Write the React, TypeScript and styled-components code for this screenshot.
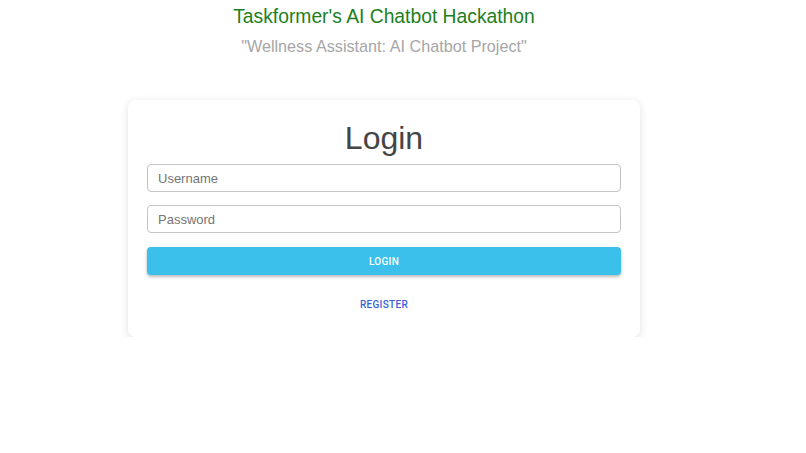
import React from "react";
import styled, { createGlobalStyle } from "styled-components";

const GlobalStyle = createGlobalStyle`
    body {
        margin: 0;
        background: #ffffff;
        font-family: "Liberation Sans", Arial, sans-serif;
    }
`;

const Page = styled.div`
    width: 768px;
    display: flex;
    flex-direction: column;
    align-items: center;
`;

const Header = styled.header`
    display: flex;
    flex-direction: column;
    align-items: center;
    padding-top: 6px;
`;

const Title = styled.h2`
    margin: 0;
    font-size: 19.3px;
    font-weight: normal;
    line-height: 22px;
    color: #1d7f1d;
`;

const Subtitle = styled.h3`
    margin: 7px 0 0;
    font-size: 16.2px;
    font-weight: normal;
    line-height: 22px;
    color: #a6a6a6;
`;

const Card = styled.form`
    margin-top: 43px;
    width: 512px;
    box-sizing: border-box;
    padding: 18px 19px 23px;
    background: #fff;
    border-radius: 8px;
    box-shadow: 0 2px 8px rgba(0, 0, 0, 0.12);
    display: flex;
    flex-direction: column;
`;

const Heading = styled.h1`
    margin: 0 0 6px;
    text-align: center;
    font-size: 32px;
    font-weight: normal;
    line-height: 40px;
    color: #454545;
`;

const Input = styled.input`
    height: 28px;
    box-sizing: border-box;
    margin-bottom: 13px;
    padding: 0 10px;
    border: 1px solid #c4c4c4;
    border-radius: 4px;
    font-family: "Liberation Sans", Arial, sans-serif;
    font-size: 13px;
    color: #333;
    outline: none;

    &::placeholder {
        color: #757575;
    }
`;

const SubmitButton = styled.button`
    height: 28px;
    margin-top: 1px;
    border: none;
    border-radius: 4px;
    background: #3bc0ec;
    color: #fff;
    font-family: Roboto, "Liberation Sans", sans-serif;
    font-size: 10px;
    font-weight: 500;
    letter-spacing: 0.3px;
    text-transform: uppercase;
    box-shadow: 0 2px 3px rgba(0, 0, 0, 0.2), 0 1px 5px rgba(0, 0, 0, 0.1);
    cursor: pointer;
`;

const LinkButton = styled.button`
    align-self: center;
    margin-top: 20px;
    padding: 4px 8px;
    border: none;
    background: transparent;
    color: #3a5fd9;
    font-family: Roboto, "Liberation Sans", sans-serif;
    font-size: 10px;
    font-weight: 500;
    letter-spacing: 0.3px;
    text-transform: uppercase;
    cursor: pointer;
`;

export default function App() {
    return (
        <>
            <GlobalStyle />
            <Page>
                <Header>
                    <Title>Taskformer's AI Chatbot Hackathon</Title>
                    <Subtitle>"Wellness Assistant: AI Chatbot Project"</Subtitle>
                </Header>
                <Card onSubmit={(e) => e.preventDefault()}>
                    <Heading>Login</Heading>
                    <Input type="text" placeholder="Username" />
                    <Input type="password" placeholder="Password" />
                    <SubmitButton type="submit">Login</SubmitButton>
                    <LinkButton type="button">Register</LinkButton>
                </Card>
            </Page>
        </>
    );
}
